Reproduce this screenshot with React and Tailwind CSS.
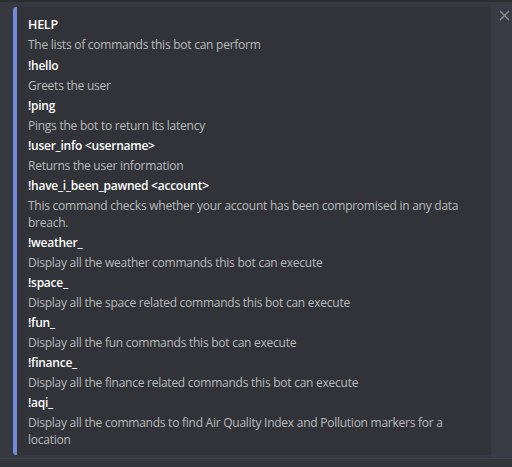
const fields = [
  { name: '!hello', value: 'Greets the user' },
  { name: '!ping', value: 'Pings the bot to return its latency' },
  { name: '!user_info <username>', value: 'Returns the user information' },
  {
    name: '!have_i_been_pawned <account>',
    value: 'This command checks whether your account has been compromised in any data breach.',
  },
  { name: '!weather_', value: 'Display all the weather commands this bot can execute' },
  { name: '!space_', value: 'Display all the space related commands this bot can execute' },
  { name: '!fun_', value: 'Display all the fun commands this bot can execute' },
  { name: '!finance_', value: 'Display all the finance related commands this bot can execute' },
  {
    name: '!aqi_',
    value: 'Display all the commands to find Air Quality Index and Pollution markers for a location',
  },
];

function Field({ name, value }) {
  return (
    <div className="mt-[3px]">
      <p className="font-semibold text-[#ffffff]">{name}</p>
      <p className="mt-[3px] text-[#b9bbbe]">{value}</p>
    </div>
  );
}

export default function App() {
  return (
    <div
      className="flex h-[467px] w-[512px] flex-col bg-[#36393f] text-[12px] leading-[17px] tracking-[-0.25px]"
      style={{ fontFamily: '"Open Sans", "Noto Sans", sans-serif' }}
    >
      <div className="h-[2px] bg-[#2b2d31]" />
      <div className="flex flex-1">
        <div className="w-[13px]" />
        <div className="mt-[5px] mb-[3px] flex w-[478px] rounded-[3px] bg-[#313338]">
          <div className="w-[4px] rounded-l-[3px] bg-[#7289da]" />
          <div className="flex-1 pl-[11px] pr-[22px] pt-[9px]">
            <p className="text-[12.5px] font-semibold text-[#ffffff]">HELP</p>
            <p className="mt-[3px] text-[#b9bbbe]">The lists of commands this bot can perform</p>
            <div className="pt-[1px]">
              {fields.map((f) => (
                <Field key={f.name} name={f.name} value={f.value} />
              ))}
            </div>
          </div>
        </div>
        <div className="flex flex-1 justify-center bg-[#383b44] pt-[8px]">
          <svg width="11" height="11" viewBox="0 0 11 11" className="ml-[5px]">
            <path d="M1 1L10 10M10 1L1 10" stroke="#8e9297" strokeWidth="1.3" />
          </svg>
        </div>
      </div>
      <div className="h-[1px] bg-[#40444f]" />
      <div className="h-[8px] bg-[#34363c]" />
    </div>
  );
}
